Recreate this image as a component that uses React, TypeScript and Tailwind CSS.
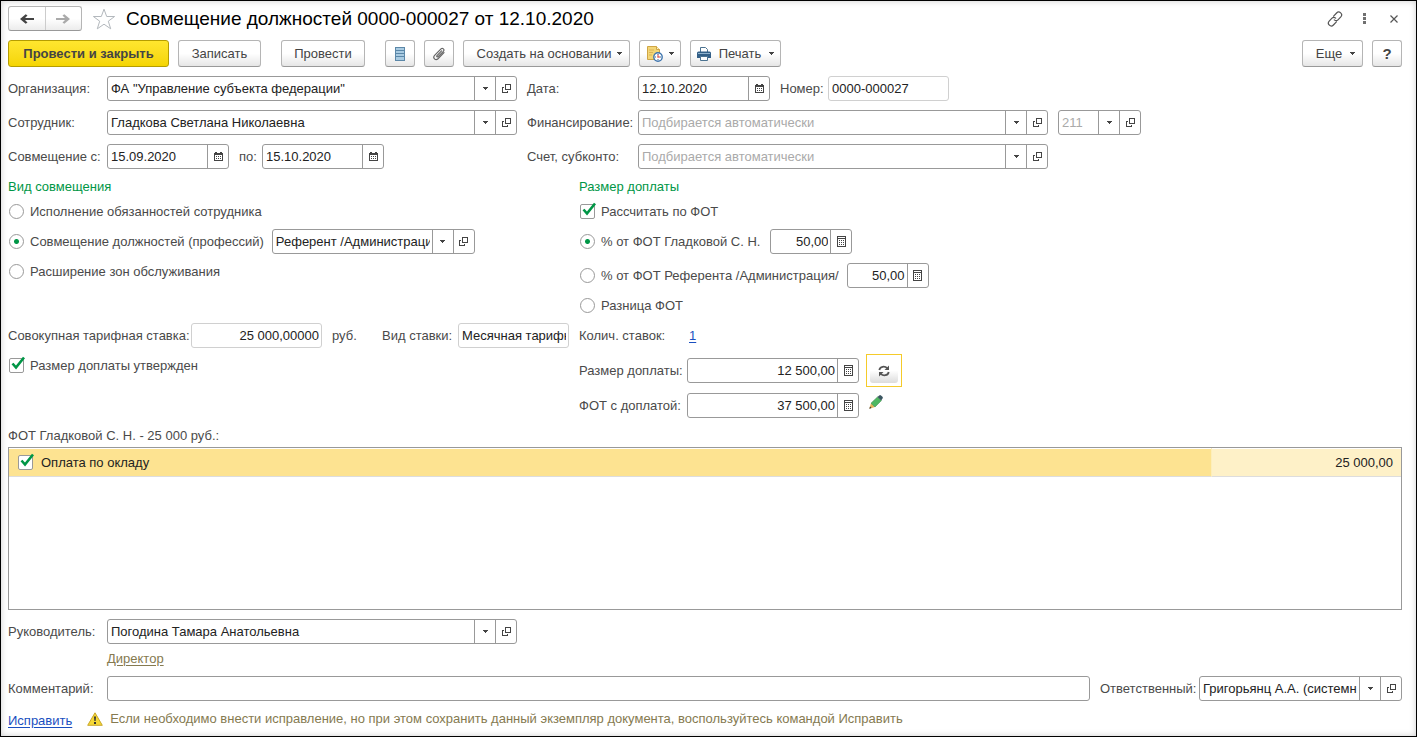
import { useId, useState } from "react";
import type { ReactNode } from "react";
import clsx from "clsx";

// ── Icons ─────────────────────────────────────────────────────────────────────

function CaretIcon() {
  return (
    <svg width="5" height="3" viewBox="0 0 5 3" aria-hidden="true">
      <path d="M0 0h5v1H4v1H3v1H2V2H1V1H0z" fill="#444" shapeRendering="crispEdges" />
    </svg>
  );
}

function OpenIcon() {
  return (
    <svg width="9" height="9" viewBox="0 0 9 9" aria-hidden="true">
      <g fill="none" stroke="#444" shapeRendering="crispEdges">
        <path d="M3.5 0.5h5v5h-5z" />
        <path d="M2 3.5H0.5v5h5V7" />
      </g>
    </svg>
  );
}

function CalendarIcon() {
  return (
    <svg width="9" height="9" viewBox="0 0 9 9" aria-hidden="true">
      <g shapeRendering="crispEdges">
        <path d="M1 0h2v1h3V0h2v1h1v8H0V1h1z" fill="#444" />
        <path d="M1 3h7v5H1z" fill="#fff" />
        <path d="M2 4h1v1H2zM4 4h1v1H4zM6 4h1v1H6zM2 6h1v1H2zM4 6h1v1H4zM6 6h1v1H6z" fill="#444" />
      </g>
    </svg>
  );
}

function CalculatorIcon() {
  return (
    <svg width="9" height="11" viewBox="0 0 9 11" aria-hidden="true">
      <g shapeRendering="crispEdges">
        <path d="M0 0h9v11H0z" fill="#444" />
        <path d="M1 1h7v1H1zM1 3h7v7H1z" fill="#fff" />
        <path
          d="M2 4h1v1H2zM4 4h1v1H4zM6 4h1v1H6zM2 6h1v1H2zM4 6h1v1H4zM6 6h1v1H6zM2 8h1v1H2zM4 8h1v1H4zM6 8h1v1H6z"
          fill="#444"
        />
      </g>
    </svg>
  );
}

function ArrowIcon({ right, color }: { right?: boolean; color: string }) {
  return (
    <svg width="14" height="10" viewBox="0 0 14 10" aria-hidden="true">
      <path
        d={
          right
            ? "M0 4h9L6.500 1.500 8.300 0.200 14 5 8.300 9.800 6.500 8.500 9 6H0z"
            : "M14 4H5L7.500 1.500 5.700 0.200 0 5 5.700 9.800 7.500 8.500 5 6H14z"
        }
        fill={color}
      />
    </svg>
  );
}

function StarIcon() {
  return (
    <svg width="24" height="22" viewBox="0 0 24 22" aria-hidden="true">
      <path
        d="M12 1.2l2.7 7.3h7.9l-6.3 4.7 2.4 7.6L12 16.2l-6.7 4.6 2.4-7.6L1.4 8.5h7.9z"
        fill="#fff"
        stroke="#b3b8bd"
      />
    </svg>
  );
}

function ListIcon() {
  return (
    <svg width="10" height="14" viewBox="0 0 10 14" aria-hidden="true">
      <g shapeRendering="crispEdges">
        <path d="M0 0h10v14H0z" fill="#5b87a8" />
        <path d="M1 1h8v2H1zM1 4h8v2H1zM1 7h8v2H1zM1 10h8v3H1z" fill="#a9cbe2" />
      </g>
    </svg>
  );
}

function ClipIcon() {
  return (
    <svg width="14" height="14" viewBox="0 0 14 14" aria-hidden="true">
      <path
        d="M9.6 3.8L5 8.6c-.7.8.4 1.8 1.1 1.1l5.3-5.4c1.5-1.7-.8-3.9-2.4-2.4L2.6 8.3c-2.3 2.5.9 5.7 3.4 3.4l6-6"
        fill="none"
        stroke="#666"
        strokeWidth="1.2"
        strokeLinecap="round"
      />
    </svg>
  );
}

function ScheduleIcon() {
  return (
    <svg width="16" height="16" viewBox="0 0 16 16" aria-hidden="true">
      <path d="M0.5 0.5h9l3 3v10h-12z" fill="#f3d677" stroke="#cfa545" />
      <path d="M9.500 0.500v3h3" fill="#fff3c4" stroke="#cfa545" />
      <path d="M2 4h5M2 6.500h4M2 9h3" stroke="#dcb455" />
      <circle cx="11" cy="11" r="4.200" fill="#fff" stroke="#3d74ad" strokeWidth="1.400" />
      <path d="M11 8v1M11 13v1M8 11h1M13 11h1" stroke="#3d6c9c" />
      <path d="M11 11.500V8.500M10.500 11h2.500" stroke="#d9463b" />
    </svg>
  );
}

function PrinterIcon() {
  return (
    <svg width="14" height="14" viewBox="0 0 14 14" aria-hidden="true">
      <path d="M3.500 5V0.500h5l2 2V5" fill="#fff" stroke="#4c7391" />
      <path d="M1.500 4.500h11q1.500 0 1.500 1.500v5H0V6q0-1.500 1.500-1.500z" fill="#346088" />
      <path d="M1 6h12v1H1z" fill="#8fb2cd" />
      <path d="M3.500 9.500h7v4h-7z" fill="#fff" stroke="#4c7391" />
    </svg>
  );
}

function LinkIcon() {
  return (
    <svg width="16" height="16" viewBox="0 0 16 16" aria-hidden="true">
      <g fill="none" stroke="#555" strokeWidth="1.200" strokeLinecap="round">
        <path d="M6.600 5.200l3-3.200c2.600-2.700 6.800 1 4.200 3.900L11 8.800c-1 1-2.600 1-3.700.1" />
        <path d="M9.400 10.800l-3 3.200c-2.600 2.700-6.800-1-4.200-3.900L5 7.200c1-1 2.600-1 3.700-.1" />
      </g>
    </svg>
  );
}

function DotsIcon() {
  return (
    <svg width="3" height="11" viewBox="0 0 3 11" aria-hidden="true">
      <path
        d="M0 0h3v3H0zM0 4h3v3H0zM0 8h3v3H0z"
        fill="#707070"
        shapeRendering="crispEdges"
      />
    </svg>
  );
}

function CloseIcon() {
  return (
    <svg width="8" height="8" viewBox="0 0 8 8" aria-hidden="true">
      <path d="M0.500 0.500l7 7M7.500 0.500l-7 7" stroke="#555" strokeWidth="1.200" />
    </svg>
  );
}

function RefreshIcon() {
  return (
    <svg width="12" height="12" viewBox="0 0 12 12" aria-hidden="true">
      <g fill="none" stroke="#555" strokeWidth="1.800">
        <path d="M1.300 5C2 1.200 6.800.800 9.200 3.200" />
        <path d="M10.700 7C10 10.800 5.200 11.200 2.800 8.800" />
      </g>
      <path d="M11 0.500V5H6.500zM1 11.500V7h4.500z" fill="#555" />
    </svg>
  );
}

function PencilIcon() {
  return (
    <svg width="14" height="14" viewBox="0 0 14 14" aria-hidden="true">
      <path d="M0.300 13.700l1.700-5.700 4 4z" fill="#e5b45c" />
      <path d="M0.300 13.700l.7-2.200 1.500 1.500z" fill="#333" />
      <path
        d="M2 8.200l6.500-6.200 3.900 3.600-6.400 6.400z"
        fill="#4fb862"
        stroke="#3f8f50"
        strokeWidth="0.600"
      />
      <path d="M8.500 2L10.200.4q.9-.7 1.800 0l1.500 1.400q.7.900 0 1.800L12.200 5.500z" fill="#3a5560" />
    </svg>
  );
}

function WarningIcon() {
  return (
    <svg width="16" height="14" viewBox="0 0 16 14" aria-hidden="true">
      <path
        d="M8 0.800L15.300 13.300H0.700z"
        fill="#f5d835"
        stroke="#c9a72c"
        strokeLinejoin="round"
      />
      <path d="M7 4.500h2l-.4 4.500H7.400zM7 10h2v2H7z" fill="#333" />
    </svg>
  );
}

// ── Controls ──────────────────────────────────────────────────────────────────

type Side = "list" | "open" | "date" | "calc";

const SIDE_TITLES: Record<Side, string> = {
  list: "Выбрать из списка",
  open: "Открыть",
  date: "Выбрать дату",
  calc: "Калькулятор",
};

function SideIcon({ side }: { side: Side }) {
  if (side === "list") return <CaretIcon />;
  if (side === "open") return <OpenIcon />;
  if (side === "date") return <CalendarIcon />;
  return <CalculatorIcon />;
}

type FieldProps = {
  label?: string;
  labelClass?: string;
  ariaLabel?: string;
  value?: string;
  placeholder?: string;
  width: string;
  sides?: Side[];
  numeric?: boolean;
  readOnly?: boolean;
};

function Field({
  label,
  labelClass,
  ariaLabel,
  value = "",
  placeholder,
  width,
  sides = [],
  numeric,
  readOnly,
}: FieldProps) {
  const id = useId();
  const [text, setText] = useState(value);
  return (
    <>
      {label && (
        <label htmlFor={id} className={clsx("shrink-0 whitespace-nowrap", labelClass)}>
          {label}
        </label>
      )}
      <div
        className={clsx(
          "flex h-[25px] rounded-[3px] border bg-white",
          readOnly ? "border-[#d0d0d0]" : "border-[#999]",
          width,
        )}
      >
        <input
          id={id}
          aria-label={ariaLabel}
          value={text}
          readOnly={readOnly}
          placeholder={placeholder}
          onChange={(e) => setText(e.target.value)}
          className={clsx(
            "mr-0.5 min-w-0 flex-1 bg-transparent text-[#222] outline-none placeholder:text-[#aaa]",
            numeric ? "text-right" : "pl-[3px]",
          )}
        />
        {sides.map((side) => (
          <button
            key={side}
            type="button"
            aria-label={SIDE_TITLES[side]}
            className="flex w-[21px] shrink-0 items-center justify-center border-l border-[#999]"
          >
            <SideIcon side={side} />
          </button>
        ))}
      </div>
    </>
  );
}

function ToolButton({
  children,
  className,
  label,
  menu,
}: {
  children: ReactNode;
  className?: string;
  label?: string;
  menu?: boolean;
}) {
  return (
    <button
      type="button"
      aria-label={label}
      className={clsx(
        "flex h-[27px] shrink-0 items-center justify-center rounded-[3px] border border-[#b5b5b5] border-b-[#999] bg-linear-to-b from-white from-50% to-[#e6e6e6] text-[#444]",
        className,
      )}
    >
      {children}
      {menu && <CaretIcon />}
    </button>
  );
}

function Check({ label, ariaLabel }: { label?: string; ariaLabel?: string }) {
  return (
    <label className="flex w-fit items-center gap-1.5">
      <span className="relative block size-[15px]">
        <input
          type="checkbox"
          defaultChecked
          aria-label={ariaLabel}
          className="peer block size-[15px] appearance-none rounded-[2px] border border-[#999] bg-white"
        />
        <svg
          width="15"
          height="15"
          viewBox="0 0 15 15"
          className="pointer-events-none absolute -top-0.5 left-0.5 hidden peer-checked:block"
          aria-hidden="true"
        >
          <path d="M1.500 7.500L5 11.500 13 1.500" fill="none" stroke="#009646" strokeWidth="2.600" />
        </svg>
      </span>
      {label}
    </label>
  );
}

function Radio({ label, name, checked }: { label: string; name: string; checked?: boolean }) {
  return (
    <label className="flex items-center gap-1.5 whitespace-nowrap">
      <input
        type="radio"
        name={name}
        defaultChecked={checked}
        className="size-[15px] shrink-0 appearance-none rounded-full border border-[#999] bg-white checked:bg-[radial-gradient(circle,#009646_2px,transparent_3px)]"
      />
      {label}
    </label>
  );
}

// ── Page parts ────────────────────────────────────────────────────────────────

function TitleBar() {
  return (
    <header className="flex h-[25px] items-center">
      <div className="flex h-[25px] w-[74px] shrink-0 rounded-[3px] border border-[#b5b5b5] border-b-[#999] bg-linear-to-b from-white from-50% to-[#ececec]">
        <button type="button" aria-label="Назад" className="flex flex-1 items-center justify-center">
          <ArrowIcon color="#444" />
        </button>
        <button
          type="button"
          aria-label="Вперед"
          className="flex flex-1 items-center justify-center border-l border-[#ccc]"
        >
          <ArrowIcon right color="#aaa" />
        </button>
      </div>
      <button type="button" aria-label="Избранное" className="ml-2.5 shrink-0">
        <StarIcon />
      </button>
      <h1 className="ml-2.5 text-[19px] leading-6 whitespace-nowrap text-black">
        Совмещение должностей 0000-000027 от 12.10.2020
      </h1>
      <div className="ml-auto flex items-center gap-5 pr-1">
        <button type="button" aria-label="Ссылка">
          <LinkIcon />
        </button>
        <button type="button" aria-label="Действия">
          <DotsIcon />
        </button>
        <button type="button" aria-label="Закрыть" className="pl-1">
          <CloseIcon />
        </button>
      </div>
    </header>
  );
}

function Toolbar() {
  return (
    <div className="mt-[9px] flex items-center">
      <button
        type="button"
        className="h-[27px] w-[161px] rounded-[3px] border border-[#b59d00] bg-linear-to-b from-[#ffe62e] to-[#f5d500] font-bold text-[#444]"
      >
        Провести и закрыть
      </button>
      <ToolButton className="ml-[9px] w-[83px]">Записать</ToolButton>
      <ToolButton className="ml-5 w-[84px]">Провести</ToolButton>
      <ToolButton className="ml-5 w-[30px]" label="Список">
        <ListIcon />
      </ToolButton>
      <ToolButton className="ml-[9px] w-[30px]" label="Файлы">
        <ClipIcon />
      </ToolButton>
      <ToolButton className="ml-[9px] w-[167px] gap-1.5 pl-1.5" menu>
        Создать на основании
      </ToolButton>
      <ToolButton className="ml-[9px] w-[42px] gap-1.5" label="Напоминание" menu>
        <ScheduleIcon />
      </ToolButton>
      <ToolButton className="ml-[9px] w-[91px] gap-2" menu>
        <PrinterIcon />
        Печать
      </ToolButton>
      <ToolButton className="ml-auto w-[61px] gap-2 pl-1.5" menu>
        Еще
      </ToolButton>
      <ToolButton className="ml-[9px] w-[30px]" label="Справка">
        <span className="text-[15px] font-bold">?</span>
      </ToolButton>
    </div>
  );
}

function MainFields() {
  return (
    <div className="mt-[9px] flex items-start gap-2.5">
      <div className="flex flex-col gap-[9px]">
        <div className="flex items-center">
          <Field
            label="Организация:"
            labelClass="w-[99px]"
            value={'ФА "Управление субъекта федерации"'}
            width="w-[410px]"
            sides={["list", "open"]}
          />
        </div>
        <div className="flex items-center">
          <Field
            label="Сотрудник:"
            labelClass="w-[99px]"
            value="Гладкова Светлана Николаевна"
            width="w-[410px]"
            sides={["list", "open"]}
          />
        </div>
        <div className="flex items-center">
          <Field
            label="Совмещение с:"
            labelClass="w-[99px]"
            value="15.09.2020"
            width="w-[122px]"
            sides={["date"]}
          />
          <Field
            label="по:"
            labelClass="ml-2.5 w-[23px]"
            value="15.10.2020"
            width="w-[122px]"
            sides={["date"]}
          />
        </div>
      </div>
      <div className="flex flex-col gap-[9px]">
        <div className="flex items-center">
          <Field
            label="Дата:"
            labelClass="w-[111px]"
            value="12.10.2020"
            width="w-[132px]"
            sides={["date"]}
          />
          <Field
            label="Номер:"
            labelClass="ml-2.5 w-12"
            value="0000-000027"
            width="w-[121px]"
            readOnly
          />
        </div>
        <div className="flex items-center">
          <Field
            label="Финансирование:"
            labelClass="w-[111px]"
            placeholder="Подбирается автоматически"
            width="w-[410px]"
            sides={["list", "open"]}
          />
          <div className="ml-2.5">
            <Field
              ariaLabel="КЭК"
              placeholder="211"
              width="w-[83px]"
              sides={["list", "open"]}
            />
          </div>
        </div>
        <div className="flex items-center">
          <Field
            label="Счет, субконто:"
            labelClass="w-[111px]"
            placeholder="Подбирается автоматически"
            width="w-[410px]"
            sides={["list", "open"]}
          />
        </div>
      </div>
    </div>
  );
}

function KindSection() {
  return (
    <section className="w-[571px] shrink-0">
      <h2 className="h-5 leading-5 text-[#009646]">Вид совмещения</h2>
      <div className="mt-0.5 flex h-[25px] items-center pl-px">
        <Radio name="kind" label="Исполнение обязанностей сотрудника" />
      </div>
      <div className="mt-[5px] flex h-[25px] items-center gap-2 pl-px">
        <Radio name="kind" label="Совмещение должностей (профессий)" checked />
        <Field
          ariaLabel="Должность"
          value="Референт /Администрация/"
          width="w-[203px]"
          sides={["list", "open"]}
        />
      </div>
      <div className="mt-[5px] flex h-[25px] items-center pl-px">
        <Radio name="kind" label="Расширение зон обслуживания" />
      </div>
      <div className="mt-[39px] flex h-[25px] items-center">
        <Field
          label="Совокупная тарифная ставка:"
          labelClass="w-[183px]"
          value="25 000,00000"
          width="w-[131px]"
          numeric
          readOnly
        />
        <span className="ml-2.5 w-[50px]">руб.</span>
        <Field
          label="Вид ставки:"
          labelClass="w-[76px]"
          value="Месячная тарифная ставка"
          width="w-[111px]"
          readOnly
        />
      </div>
      <div className="mt-[5px] flex h-[25px] items-center pl-px">
        <Check label="Размер доплаты утвержден" />
      </div>
    </section>
  );
}

function AmountSection() {
  return (
    <section>
      <h2 className="h-5 leading-5 text-[#009646]">Размер доплаты</h2>
      <div className="mt-0.5 flex h-[25px] items-center pl-px">
        <Check label="Рассчитать по ФОТ" />
      </div>
      <div className="mt-[5px] flex h-[25px] items-center gap-2.5 pl-px">
        <Radio name="amount" label="% от ФОТ Гладковой С. Н." checked />
        <Field ariaLabel="Процент" value="50,00" width="w-[82px]" sides={["calc"]} numeric />
      </div>
      <div className="mt-[9px] flex h-[25px] items-center gap-2 pl-px">
        <Radio name="amount" label="% от ФОТ Референта /Администрация/" />
        <Field ariaLabel="Процент" value="50,00" width="w-[82px]" sides={["calc"]} numeric />
      </div>
      <div className="mt-[5px] flex h-[25px] items-center pl-px">
        <Radio name="amount" label="Разница ФОТ" />
      </div>
      <div className="mt-[5px] flex h-[25px] items-center">
        <span className="w-[110px]">Колич. ставок:</span>
        <a href="#rates" className="text-[#1a4fc0] underline underline-offset-2">
          1
        </a>
      </div>
      <div className="mt-1.5 flex h-[33px] items-center">
        <Field
          label="Размер доплаты:"
          labelClass="w-[108px]"
          value="12 500,00"
          width="w-[172px]"
          sides={["calc"]}
          numeric
        />
        <div className="ml-[7px] flex h-[33px] w-9 items-end justify-center border border-[#f5cb2a] p-[3px]">
          <button
            type="button"
            aria-label="Пересчитать"
            className="flex h-[25px] w-full items-center justify-center rounded-[3px] bg-linear-to-b from-white from-50% to-[#dcdcdc]"
          >
            <RefreshIcon />
          </button>
        </div>
      </div>
      <div className="mt-0.5 flex h-[33px] items-center">
        <Field
          label="ФОТ с доплатой:"
          labelClass="w-[108px]"
          value="37 500,00"
          width="w-[172px]"
          sides={["calc"]}
          numeric
        />
        <button type="button" aria-label="Изменить" className="mb-2 ml-2.5">
          <PencilIcon />
        </button>
      </div>
    </section>
  );
}

function PayTable() {
  return (
    <>
      <h3 className="mt-1.5 h-[19px] leading-4">ФОТ Гладковой С. Н. - 25 000 руб.:</h3>
      <div className="min-h-[100px] flex-1 border border-[#999] bg-white">
        <table className="w-full border-collapse">
          <tbody>
            <tr className="h-7 border-t border-b border-t-white border-b-[#ddd] text-[#222]">
              <td className="bg-[#fde391] pl-[9px]">
                <div className="flex items-center gap-2">
                  <Check ariaLabel="Оплата по окладу" />
                  Оплата по окладу
                </div>
              </td>
              <td className="w-[190px] border-l border-[#fdeeba] bg-[#fef1c8] pr-2 text-right">
                25 000,00
              </td>
            </tr>
          </tbody>
        </table>
      </div>
    </>
  );
}

function Footer() {
  return (
    <footer className="mt-[9px]">
      <div className="flex items-center">
        <Field
          label="Руководитель:"
          labelClass="w-[99px]"
          value="Погодина Тамара Анатольевна"
          width="w-[410px]"
          sides={["list", "open"]}
        />
      </div>
      <a
        href="#position"
        className="mt-[7px] ml-[99px] block w-fit leading-4 text-[#857a50] underline underline-offset-2"
      >
        Директор
      </a>
      <div className="mt-[9px] flex items-center">
        <Field label="Комментарий:" labelClass="w-[99px]" width="flex-1" />
        <Field
          label="Ответственный:"
          labelClass="ml-2.5 w-[99px]"
          value="Григорьянц А.А. (системный)"
          width="w-[203px]"
          sides={["list", "open"]}
        />
      </div>
      <div className="mt-2 flex h-5 items-center text-[#857a50]">
        <a href="#fix" className="mt-1 text-[#1a4fc0] underline underline-offset-2">
          Исправить
        </a>
        <span className="mr-[7px] ml-[15px]">
          <WarningIcon />
        </span>
        <p>
          Если необходимо внести исправление, но при этом сохранить данный экземпляр документа,
          воспользуйтесь командой Исправить
        </p>
      </div>
    </footer>
  );
}

export default function App() {
  return (
    <main className="mr-px flex min-h-screen flex-col border border-black bg-white pt-[5px] pr-3.5 pb-[7px] pl-[7px] font-['Liberation_Sans',Arial,sans-serif] text-[13px] leading-4 text-[#4a4a4a] shadow-[inset_0_0_6px_#ccc]">
      <TitleBar />
      <Toolbar />
      <MainFields />
      <div className="mt-2 flex items-start">
        <KindSection />
        <AmountSection />
      </div>
      <PayTable />
      <Footer />
    </main>
  );
}
